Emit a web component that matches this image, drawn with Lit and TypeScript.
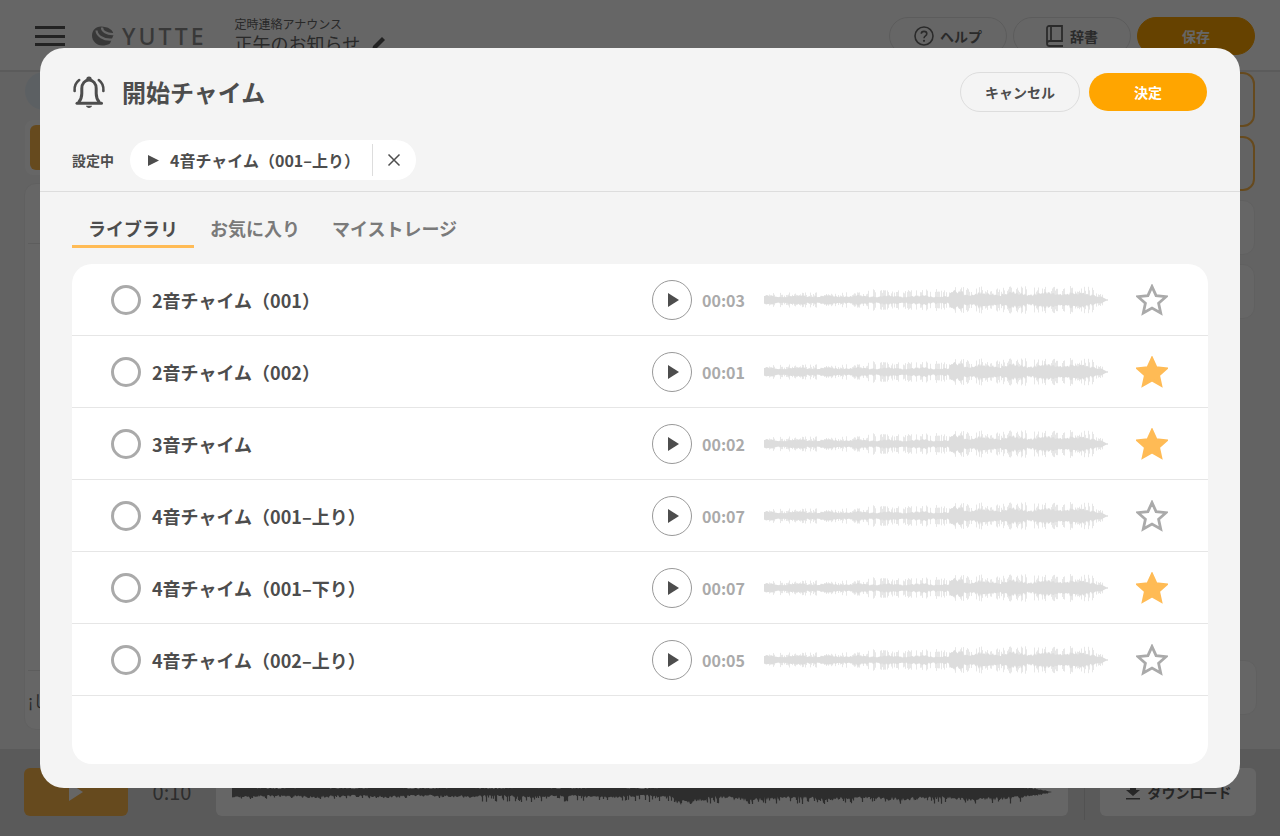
import { LitElement, html, css } from "lit";
import { customElement } from "lit/decorators.js";

function seeded(i: number) {
  const x = Math.sin(i * 12.9898 + 4.1) * 43758.5453;
  return x - Math.floor(x);
}

interface WaveOpts { coreLo: number; coreHi: number; spikeLo: number; spikeHi: number; seed: number; down: number; every: number; }

// Waveform: a solid core plus thin vertical spikes. The jump to the loud part sits at 54% of the width.
function wave(w: number, o: WaveOpts) {
  const taper = (t: number) => (t > 0.955 ? (1 - t) / 0.045 : 1);
  const top: string[] = [];
  const bottom: string[] = [];
  let spikes = "";
  for (let x = 0; x <= w; x += 1) {
    const t = x / w;
    const loud = t >= 0.54;
    const bump = t >= 0.54 && t < 0.58 ? 1.3 : 1;
    const slow = 0.86 + 0.14 * Math.sin(t * 70 + 1);
    const r = seeded(x + o.seed);
    const r2 = seeded(x * 3 + o.seed + 11);
    const base = loud ? o.coreHi * bump : o.coreLo;
    const core = base * slow * taper(t) * (0.7 + r * 0.45);
    top.push(`${x},${(-core).toFixed(1)}`);
    bottom.unshift(`${x},${(core * (0.85 + r2 * 0.3)).toFixed(1)}`);
    if (r2 > o.every) {
      const s = (loud ? o.spikeHi : o.spikeLo * (t > 0.3 ? 1 : 0.7)) * taper(t) * (0.55 + r * 0.45);
      spikes += `M${x + 0.5} ${(-s * (1 - o.down)).toFixed(1)}V${s.toFixed(1)}`;
    }
  }
  return { core: `M${top.join("L")}L${bottom.join("L")}Z`, spikes };
}

const LIST_WAVE = wave(344, { coreLo: 4.6, coreHi: 7.6, spikeLo: 11, spikeHi: 14, seed: 0, down: 0, every: 0.5 });
const FOOT_WAVE = wave(820, { coreLo: 5.4, coreHi: 8.4, spikeLo: 10, spikeHi: 12, seed: 7, down: 0.6, every: 0.72 });

const rows = [
  { name: "2音チャイム（001）", time: "00:03", fav: false },
  { name: "2音チャイム（002）", time: "00:01", fav: true },
  { name: "3音チャイム", time: "00:02", fav: true },
  { name: "4音チャイム（001–上り）", time: "00:07", fav: false },
  { name: "4音チャイム（001–下り）", time: "00:07", fav: true },
  { name: "4音チャイム（002–上り）", time: "00:05", fav: false },
];

const STAR = "M16 2.6 L20.1 11.6 L30 12.7 L22.6 19.3 L24.7 29 L16 24 L7.3 29 L9.4 19.3 L2 12.7 L11.9 11.6 Z";

@customElement("app-root")
export class AppRoot extends LitElement {
  static styles = css`
    :host { display: block; position: relative; width: 1280px; height: 836px; overflow: hidden; font-family: "Noto Sans CJK JP", "Noto Sans", sans-serif; color: #4d4d4d; background: #fff; }
    .page { display: flex; flex-direction: column; height: 836px; }
    .top { height: 72px; flex: none; display: flex; align-items: center; padding: 0 25px 0 35px; background: #fff; border-bottom: 2px solid #e4e4e4; box-sizing: border-box; }
    .burger { width: 30px; height: 20px; flex: none; display: flex; flex-direction: column; justify-content: space-between; margin-top: 2px; }
    .burger i { display: block; height: 3px; background: #555; }
    .logo { display: flex; align-items: center; gap: 8px; margin-left: 27px; flex: none; margin-top: 2px; }
    .logo span { font: 500 23px/1 "Noto Sans", sans-serif; letter-spacing: 3px; color: #8c8c8c; }
    .title { margin-left: 28px; display: flex; flex-direction: column; flex: 1; color: #666; }
    .title small { font-size: 12px; line-height: 16px; }
    .title div { font-size: 18px; line-height: 22px; display: flex; gap: 11px; align-items: center; }
    .tbtn { height: 38px; border-radius: 19px; border: 1px solid #e6e6e6; box-sizing: border-box; width: 118px; margin-left: 6px; display: flex; align-items: center; justify-content: center; gap: 6px; font-size: 14px; font-weight: 700; color: #6a6a6a; margin-top: 2px; }
    .tbtn.save { background: #ffa500; border-color: #ffa500; color: #fff; }
    .main { flex: 1; background: #f7f7f7; padding: 0 25px 0 24px; display: flex; justify-content: space-between; box-sizing: border-box; min-height: 0; }
    .lcol { width: 400px; display: flex; flex-direction: column; }
    .avatar { width: 38px; height: 38px; border-radius: 50%; background: #e6f0f8; margin-left: 1px; flex: none; }
    .owrap { flex: none; margin: 10px 0 8px 1px; width: 60px; height: 55px; padding: 5px; box-sizing: border-box; background: #fff; border-radius: 8px; }
    .orange { height: 45px; border-radius: 6px; background: #ffb84d; }
    .panel { flex: 1; background: #fff; border: 1px solid #f0f0f0; border-radius: 12px; display: flex; flex-direction: column; margin-bottom: 19px; box-sizing: border-box; font-size: 16px; color: #666; }
    .phead { height: 59px; flex: none; border-bottom: 1px solid #e8e8e8; margin-left: 3px; }
    .pmid { flex: 1; }
    .pfoot { height: 58px; flex: none; border-top: 1px solid #e8e8e8; margin-left: 3px; display: flex; align-items: center; }
    .rcol { width: 300px; display: flex; flex-direction: column; gap: 9px; }
    .outline { height: 55px; border: 2px solid #ffb84d; border-radius: 12px; box-sizing: border-box; flex: none; }
    .soft { height: 55px; background: #fff; border: 1px solid #f0f0f0; border-radius: 12px; box-sizing: border-box; flex: none; }
    .grow { flex: 1; }
    .soft.last { margin-bottom: 34px; margin-right: -2px; }
    .bottom { height: 87px; flex: none; background: #e2e2e2; display: flex; align-items: flex-start; padding: 19px 24px 0; box-sizing: border-box; }
    .playbig { width: 104px; height: 48px; border-radius: 6px; background: #ffb84d; display: flex; align-items: center; justify-content: center; flex: none; }
    .t10 { width: 88px; text-align: center; font-size: 20px; line-height: 48px; color: #707070; flex: none; }
    .bigwave { width: 852px; height: 48px; background: #fff; border-radius: 6px; display: flex; align-items: center; justify-content: center; flex: none; }
    .vline { width: 1px; height: 52px; background: #ccc; margin: 0 15px 0 16px; flex: none; }
    .dl { width: 156px; height: 48px; border-radius: 6px; background: #fff; display: flex; align-items: center; justify-content: center; gap: 7px; font-size: 14px; font-weight: 700; color: #606060; flex: none; }

    .overlay { position: absolute; inset: 0; background: rgba(0, 0, 0, .6); display: flex; justify-content: center; padding-top: 48px; box-sizing: border-box; }
    .modal { width: 1200px; height: 740px; background: #f4f4f4; border-radius: 24px; display: flex; flex-direction: column; }
    .mhead { flex: none; display: flex; align-items: center; height: 88px; padding: 0 33px 0 32px; box-sizing: border-box; }
    .mhead h1 { margin: 0 0 0 16px; font-size: 24px; line-height: 32px; font-weight: 700; color: #4d4d4d; flex: 1; }
    .btn { height: 38px; border-radius: 20px; display: flex; align-items: center; justify-content: center; font-size: 14px; font-weight: 700; box-sizing: border-box; }
    .cancel { width: 120px; height: 40px; border: 1px solid #ddd; color: #4d4d4d; margin-right: 9px; }
    .ok { width: 118px; background: #ffa500; color: #fff; }
    .current { flex: none; height: 51px; padding: 4px 0 0 32px; display: flex; align-items: flex-start; border-bottom: 1px solid #ddd; }
    .current label { font-size: 14px; line-height: 40px; font-weight: 700; color: #4d4d4d; width: 58px; }
    .pill { height: 40px; width: 286px; background: #fff; border-radius: 20px; display: flex; align-items: center; box-sizing: border-box; padding-left: 18px; }
    .pill .name { font-size: 16px; font-weight: 700; margin-left: 11px; width: 202px; white-space: nowrap; }
    .pill .sep { width: 1px; height: 32px; background: #ddd; flex: none; }
    .pill .x { flex: 1; display: flex; justify-content: center; padding-right: 1px; }
    .tabs { flex: none; display: flex; padding: 24px 0 0 32px; height: 72px; box-sizing: border-box; }
    .tab { height: 32px; padding: 0 16px; font-size: 18px; line-height: 24px; font-weight: 700; color: #7a7a7a; box-sizing: border-box; }
    .tab.on { color: #4d4d4d; border-bottom: 3px solid #ffbb55; }
    .list { margin: 0 32px; height: 500px; background: #fff; border-radius: 20px; overflow: hidden; flex: none; }
    .row { height: 72px; display: flex; align-items: center; border-bottom: 1px solid #e6e6e6; box-sizing: border-box; padding-left: 39px; }
    .radio { width: 30px; height: 30px; border: 3px solid #aaa; border-radius: 50%; box-sizing: border-box; flex: none; }
    .rname { font-size: 18px; font-weight: 700; color: #4d4d4d; margin-left: 11px; width: 500px; white-space: nowrap; line-height: 26px; }
    .play { width: 40px; height: 40px; border: 1px solid #999; border-radius: 50%; box-sizing: border-box; display: flex; align-items: center; justify-content: center; flex: none; padding-left: 3px; }
    .time { font-size: 16px; font-weight: 700; color: #aaa; width: 62px; margin-left: 10px; line-height: 24px; flex: none; }
    .wave { flex: none; display: block; }
    .star { flex: none; margin-left: 28px; display: block; }
  `;

  private tri(w: number, h: number, color: string) {
    return html`<svg width=${w} height=${h} viewBox="0 0 ${w} ${h}"><path d="M0 0 L${w} ${h / 2} L0 ${h} Z" fill=${color}></path></svg>`;
  }

  private background() {
    return html`
      <div class="page">
        <div class="top">
          <div class="burger"><i></i><i></i><i></i></div>
          <div class="logo">
            <svg width="22" height="20" viewBox="0 0 22 20">
              <path d="M9 0.5 C3.5 0.5 0 4.5 0 9.5 C0 15 4.5 19.5 10 19.5 C13 19.5 15.5 19 18 17.5 L21.5 9 C21.5 4 16 0.5 9 0.5 Z" fill="#8c8c8c"></path>
              <path d="M4.5 4.5 C5 9.5 11 14.5 20.5 13.5 M10 1.5 C10 5 14.5 8.5 22 8 " fill="none" stroke="#fff" stroke-width="2.2"></path>
            </svg>
            <span>YUTTE</span>
          </div>
          <div class="title">
            <small>定時連絡アナウンス</small>
            <div>正午のお知らせ
              <svg width="16" height="16" viewBox="0 0 16 16"><path d="M1 15 L2 11 L11 2 L14 5 L5 14 Z" fill="#555"></path></svg>
            </div>
          </div>
          <div class="tbtn">
            <svg width="20" height="20" viewBox="0 0 20 20"><circle cx="10" cy="10" r="9" fill="none" stroke="#6a6a6a" stroke-width="1.6"></circle><path d="M7.3 7.8 C7.3 4.6 12.8 4.6 12.8 7.8 C12.8 10 10 9.8 10 12.2" fill="none" stroke="#6a6a6a" stroke-width="1.6"></path><circle cx="10" cy="14.8" r="1.1" fill="#6a6a6a"></circle></svg>
            ヘルプ
          </div>
          <div class="tbtn">
            <svg width="18" height="22" viewBox="0 0 18 22"><path d="M1 18 V3 C1 2 2 1 3 1 H16 V16 H3.5 C2 16 1 17 1 18.5 C1 20 2 21 3.5 21 H17 M5 1 V16" fill="none" stroke="#6a6a6a" stroke-width="1.8"></path></svg>
            辞書
          </div>
          <div class="tbtn save">保存</div>
        </div>
        <div class="main">
          <div class="lcol">
            <div class="avatar"></div>
            <div class="owrap"><div class="orange"></div></div>
            <div class="panel">
              <div class="phead"></div>
              <div class="pmid"></div>
              <div class="pfoot">¡し</div>
            </div>
          </div>
          <div class="rcol">
            <div class="outline"></div>
            <div class="outline"></div>
            <div class="soft"></div>
            <div class="soft"></div>
            <div class="grow"></div>
            <div class="soft last"></div>
          </div>
        </div>
        <div class="bottom">
          <div class="playbig">${this.tri(14, 18, "#fff")}</div>
          <div class="t10">0:10</div>
          <div class="bigwave">
            <svg width="820" height="34" viewBox="0 -17 820 34"><path d=${FOOT_WAVE.spikes} stroke="#707070" stroke-width="1.2" fill="none"></path><path d=${FOOT_WAVE.core} fill="#707070"></path></svg>
          </div>
          <div class="vline"></div>
          <div class="dl">
            <svg width="16" height="16" viewBox="0 0 16 16"><path d="M5 1 H11 V6 H15 L8 12 L1 6 H5 Z M1 14 H15 V15.5 H1 Z" fill="#606060"></path></svg>
            ダウンロード
          </div>
        </div>
      </div>`;
  }

  render() {
    return html`
      ${this.background()}
      <div class="overlay">
        <div class="modal">
          <div class="mhead">
            <svg width="34" height="34" viewBox="0 0 34 34">
              <path d="M6.5 27.5 C8.8 25 9.8 22.5 9.8 18.5 V13.5 C9.8 8.5 13 5 17 5 C21 5 24.2 8.5 24.2 13.5 V18.5 C24.2 22.5 25.2 25 27.5 27.5" fill="none" stroke="#4d4d4d" stroke-width="3" stroke-linejoin="round"></path>
              <path d="M5 28.2 H29.5" stroke="#4d4d4d" stroke-width="3" stroke-linecap="round"></path>
              <path d="M14 30.8 H20 C19.6 33.6 14.4 33.6 14 30.8 Z" fill="#4d4d4d"></path>
              <path d="M15.4 4.6 C15.4 2 18.6 2 18.6 4.6" fill="none" stroke="#4d4d4d" stroke-width="2.4"></path>
              <path d="M2.6 16 C2.2 11.5 3.8 7.5 7.2 5 M31.4 16 C31.8 11.5 30.2 7.5 26.8 5" fill="none" stroke="#4d4d4d" stroke-width="2.6" stroke-linecap="round"></path>
            </svg>
            <h1>開始チャイム</h1>
            <div class="btn cancel">キャンセル</div>
            <div class="btn ok">決定</div>
          </div>
          <div class="current">
            <label>設定中</label>
            <div class="pill">
              ${this.tri(11, 11, "#4d4d4d")}
              <span class="name">4音チャイム（001–上り）</span>
              <span class="sep"></span>
              <span class="x"><svg width="14" height="14" viewBox="0 0 14 14"><path d="M1.5 1.5 L12.5 12.5 M12.5 1.5 L1.5 12.5" stroke="#4d4d4d" stroke-width="1.5"></path></svg></span>
            </div>
          </div>
          <div class="tabs">
            <div class="tab on">ライブラリ</div>
            <div class="tab">お気に入り</div>
            <div class="tab">マイストレージ</div>
          </div>
          <div class="list">
            ${rows.map(
              (r) => html`<div class="row">
                <span class="radio"></span>
                <span class="rname">${r.name}</span>
                <span class="play">${this.tri(11, 14, "#4d4d4d")}</span>
                <span class="time">${r.time}</span>
                <svg class="wave" width="344" height="32" viewBox="0 -16 344 32">
                  <path d=${LIST_WAVE.spikes} stroke="#e4e4e4" stroke-width="0.9" fill="none"></path>
                  <path d=${LIST_WAVE.core} fill="#dddddd"></path>
                </svg>
                <svg class="star" width="32" height="32" viewBox="0 0 32 32">
                  <path d=${STAR} fill=${r.fav ? "#ffbb55" : "none"} stroke=${r.fav ? "#ffbb55" : "#aaa"} stroke-width="2.8"></path>
                </svg>
              </div>`
            )}
          </div>
        </div>
      </div>
    `;
  }
}
